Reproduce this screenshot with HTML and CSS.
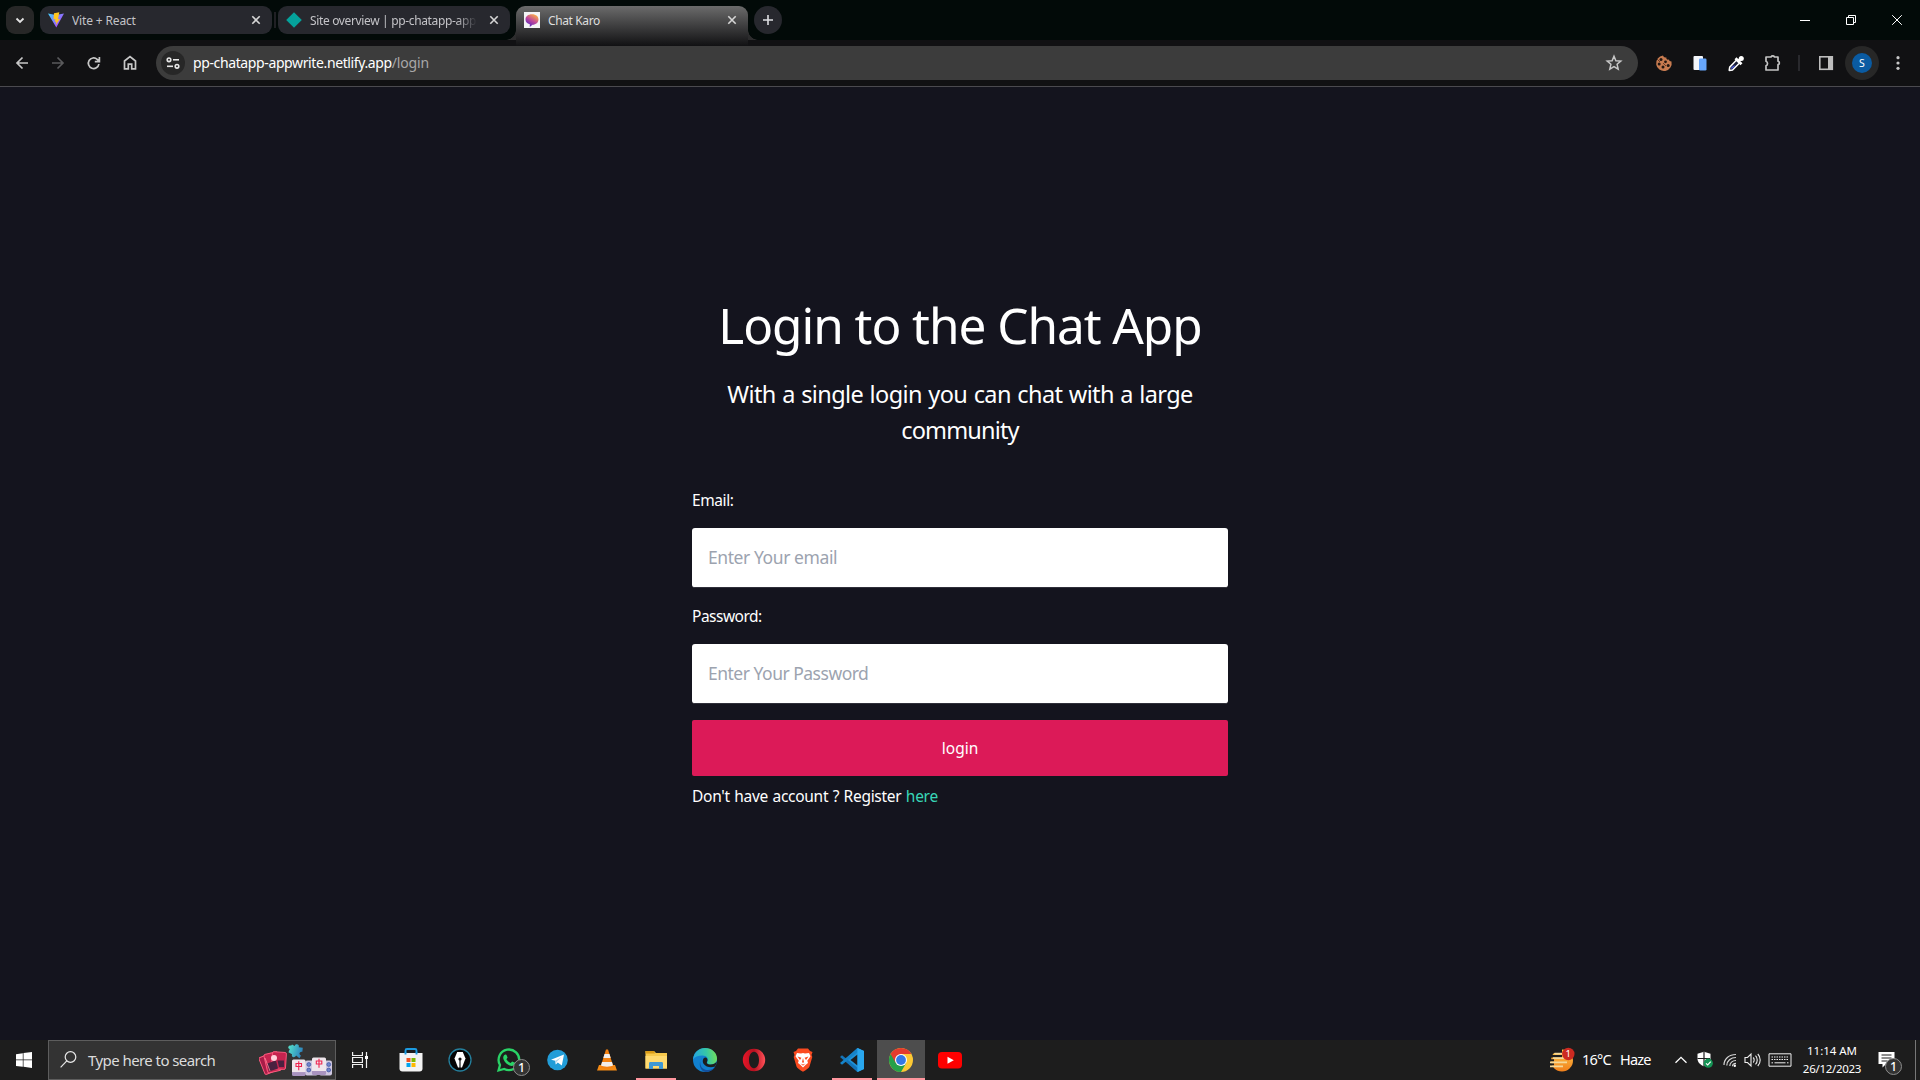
FILE: index.html
```html
<!DOCTYPE html>
<html lang="en">
<head>
<meta charset="utf-8">
<title>Chat Karo</title>
<link rel="stylesheet" href="styles.css">
</head>
<body>
<div class="screen">
  <header class="tabstrip">
    <button class="tab-search"><svg width="28" height="28" viewBox="0 0 28 28"><path d="M10.500 12.500l3.500 3.500 3.500-3.500" fill="none" stroke="#e3e3e3" stroke-width="1.800"/></svg></button>
    <div class="tab tab-first">
      <svg class="favicon" width="16" height="16" viewBox="0 0 16 16"><defs><linearGradient id="vite" x1="0" x2="1" y2=".8"><stop stop-color="#41d1ff"/><stop offset="1" stop-color="#bd34fe"/></linearGradient></defs><path d="M0 1.500L8 3l8-1.500L8.300 15.500z" fill="url(#vite)"/><path d="M11.300.300L6 1.300l-.500 6.200 1.900-.400-.600 2.800 1.500-.400-.500 3.500L12 6.800l-2 .400z" fill="#ffc61f"/></svg>
      <span class="tab-title t-vite">Vite + React</span>
      <svg class="close" width="10" height="10" viewBox="0 0 10 10"><path d="M1.300 1.300l7.400 7.400m0-7.400L1.300 8.700"/></svg>
    </div>
    <i class="tab-divider"></i>
    <div class="tab">
      <svg class="favicon" width="16" height="16" viewBox="0 0 16 16"><path d="M8 .200L15.800 8 8 15.800.200 8z" fill="#05a29b"/></svg>
      <span class="tab-title t-site">Site overview | pp-chatapp-app</span>
      <svg class="close" width="10" height="10" viewBox="0 0 10 10"><path d="M1.300 1.300l7.400 7.400m0-7.400L1.300 8.700"/></svg>
    </div>
    <div class="tab tab-active">
      <svg class="favicon" width="16" height="16" viewBox="0 0 16 16"><defs><linearGradient id="karo" x1=".8" y1="0" x2=".2" y2="1"><stop stop-color="#ffb340"/><stop offset=".5" stop-color="#c0479b"/><stop offset="1" stop-color="#4420c4"/></linearGradient></defs><rect width="16" height="16" fill="#f4f4f6"/><path d="M8 2.300c4.200 0 6.500 2.300 6.500 5.200S12 12.700 8.500 12.800L5.800 15v-2.700C3 11.500 1.500 10 1.500 7.500c0-3 2.500-5.200 6.500-5.200z" fill="url(#karo)"/></svg>
      <span class="tab-title t-karo">Chat Karo</span>
      <svg class="close" width="10" height="10" viewBox="0 0 10 10"><path d="M1.300 1.300l7.400 7.400m0-7.400L1.300 8.700"/></svg>
    </div>
    <button class="new-tab"><svg width="28" height="28" viewBox="0 0 28 28"><path d="M14 9v10M9 14h10" stroke="#dedee2" stroke-width="1.600"/></svg></button>
    <div class="window-controls">
      <svg width="46" height="40" viewBox="0 0 46 40"><path d="M18 20.500h10"/></svg>
      <svg width="46" height="40" viewBox="0 0 46 40"><path d="M18.500 17.500h7v7h-7zM20.500 17v-1.500h7v7H26"/></svg>
      <svg width="46" height="40" viewBox="0 0 46 40"><path d="M18.200 15.200l9.600 9.600m0-9.600l-9.600 9.600"/></svg>
    </div>
  </header>

  <nav class="toolbar">
    <div class="nav-buttons">
      <svg width="36" height="34" viewBox="0 0 36 34"><path d="M28 17H17m5.500-5.500L17 17l5.500 5.500" /></svg>
      <svg class="dim" width="36" height="34" viewBox="0 0 36 34"><path d="M16 17h11m-5.500-5.500L27 17l-5.500 5.500"/></svg>
      <svg width="36" height="34" viewBox="0 0 36 34"><path d="M26.900 18A5.300 5.300 0 1 1 25.200 13.300L27.200 15.300M27.400 11v4.600h-4.600"/></svg>
      <svg width="36" height="34" viewBox="0 0 36 34"><path d="M16.500 22.800V15l5.500-4.300 5.500 4.300v7.800h-3.800v-4.600h-3.400v4.600z"/></svg>
    </div>
    <div class="omnibox">
      <div class="site-info"><svg width="24" height="24" viewBox="0 0 24 24"><circle cx="8" cy="8.800" r="1.800"/><path d="M12 8.800h6"/><path d="M6 15.300h6"/><circle cx="16" cy="15.300" r="1.800"/></svg></div>
      <div class="url"><span class="host">pp-chatapp-appwrite.netlify.app</span><span class="path">/login</span></div>
      <svg class="star" width="18" height="18" viewBox="0 0 18 18"><path d="M9 2.200l1.900 4.500 4.900.400-3.700 3.200 1.100 4.800L9 12.600l-4.200 2.500 1.100-4.800-3.700-3.200 4.900-.400z"/></svg>
    </div>
    <div class="extensions">
      <svg width="36" height="34" viewBox="0 0 36 34"><path d="M17 9.500a7.800 7.800 0 1 0 8.500 6c-1.500 0-2.500-.8-2.500-2-1.800.500-3-.500-2.600-2-1.500.200-2.800-.500-3.400-2z" fill="#c77b50"/><g fill="#231711"><circle cx="15" cy="13.500" r="1.500"/><circle cx="19.500" cy="15.800" r="1.400"/><circle cx="13.200" cy="18" r="1.500"/><circle cx="17" cy="21" r="1.500"/><circle cx="22.200" cy="19.500" r="1.500"/></g><path d="M11 13l3 3m3 1l3 3" stroke="#6d3c25"/></svg>
      <svg width="36" height="34" viewBox="0 0 36 34"><rect x="11.500" y="10" width="9.500" height="14" rx="1" fill="#f4f6fb"/><rect x="17" y="12.500" width="7.500" height="12" rx="1.200" fill="#67a6fb"/></svg>
      <svg width="36" height="34" viewBox="0 0 36 34"><path d="M18.500 14l3 3-7 7-3 .500-.300-.300.500-3z" fill="#171b35" stroke="#fff" stroke-width="1.500"/><path d="M13 22.800l.500-1.800 2.500-1.500h1.500l-3.300 3.200z" fill="#4b5bd8"/><path d="M17.500 12.200l6 6M20.500 15l3.200-3.500" stroke="#fff" stroke-width="2.800"/><circle cx="23.300" cy="12.500" r="2.500" fill="#fff"/></svg>
      <svg width="36" height="34" viewBox="0 0 36 34"><path d="M12 11h5a2 2 0 0 1 3.500 0H24v4.200a1.800 1.800 0 0 1 0 3.500V24H12v-4.200a2.500 2.500 0 0 0 0-4.600z" fill="none" stroke="#c3c3c3" stroke-width="1.700" stroke-linejoin="round"/></svg>
      <i class="tool-divider"></i>
      <svg width="36" height="34" viewBox="0 0 36 34"><rect x="11.800" y="10.800" width="12.500" height="12.500" fill="none" stroke="#bdbdbd" stroke-width="1.600"/><path d="M20 10h5v14h-5z" fill="#bdbdbd"/></svg>
      <div class="profile"><span>S</span></div>
      <svg class="menu" width="8" height="34" viewBox="0 0 8 34" fill="#c7c7c7"><circle cx="4" cy="11.700" r="1.600"/><circle cx="4" cy="17" r="1.600"/><circle cx="4" cy="22.300" r="1.600"/></svg>
    </div>
  </nav>

  <main class="page">
    <section class="login">
      <h1>Login to the Chat App</h1>
      <p class="lead">With a single login you can chat with a large<br><span class="lead-end">community</span></p>
      <form class="form">
        <label class="label-email" for="email">Email:</label>
        <input id="email" class="in-email" type="text" placeholder="Enter Your email">
        <label class="label-pass" for="pass">Password:</label>
        <input id="pass" class="in-pass" type="password" placeholder="Enter Your Password">
        <button class="submit" type="button">login</button>
      </form>
      <p class="register">Don't have account ? Register <a>here</a></p>
    </section>
  </main>

  <footer class="taskbar">
    <div class="start"><svg width="16" height="16" viewBox="0 0 16 16" fill="#fff"><path d="M0 2.200l6.800-1v6.300H0zM7.500 1.100L16 0v7.500H7.500zM0 8.300h6.800v6.500L0 13.900zM7.500 8.300H16V16l-8.500-1.200z"/></svg></div>
    <div class="search">
      <svg width="17" height="17" viewBox="0 0 17 17" fill="none" stroke="#e8e8e8" stroke-width="1.200"><circle cx="10.500" cy="6" r="5.300"/><path d="M6.800 9.800L.600 16.300"/></svg>
      <span class="search-text">Type here to search</span>
      <svg class="doodle" width="74" height="36" viewBox="0 0 74 36">
        <defs><linearGradient id="pz" x1="0" x2="1"><stop stop-color="#55dfca"/><stop offset="1" stop-color="#2c82bd"/></linearGradient><linearGradient id="tile" x2="0" y2="1"><stop offset=".76" stop-color="#efe6ec"/><stop offset=".79" stop-color="#a893bf"/></linearGradient></defs>
        <g stroke="#ff5c80" stroke-width=".9"><rect x="2.500" y="13" width="14" height="18" rx="1.500" transform="rotate(-22 9 22)" fill="#a81c48"/><rect x="6.500" y="11" width="14" height="19" rx="1.500" transform="rotate(-13 13 20)" fill="#c5244f"/><rect x="13" y="10" width="14" height="17" rx="1.500" transform="rotate(4 19 18)" fill="#c5244f"/></g>
        <path d="M8 21.500l9-3 2 8-9 3zM18.500 18.500h6.500v6.500h-5z" fill="#4a2140"/><circle cx="15" cy="16" r="3" fill="#ffd2dc"/><path d="M6 16l5 13" stroke="#ff8ca2" stroke-width=".8"/>
        <path d="M31.500 4l3 .5c.3-3 4.300-3 4.300 0l4-.8.800 4c-3 .3-3 3.800 0 4l-.8 3-4-1.500c-.5 3.500-4.500 3-4.300 0l-4-.700.300-3.500c-2.800 0-2.800-3.600.300-3.800z" transform="rotate(18 37 8)" fill="url(#pz)"/>
        <rect x="46" y="18.500" width="13" height="15" rx="2" fill="#cfc7e0"/><rect x="60" y="18.500" width="13" height="15" rx="2" fill="#cfc7e0"/>
        <g fill="#7285cc" stroke="#4258a3" stroke-width=".8"><circle cx="49.800" cy="22.500" r="1.900"/><circle cx="49.800" cy="28" r="1.900"/><circle cx="69.700" cy="22.500" r="1.900"/><circle cx="69.700" cy="28" r="1.900"/></g>
        <rect x="33" y="17.500" width="13.500" height="16.500" rx="1.500" fill="url(#tile)"/><rect x="53" y="15.500" width="14" height="17.500" rx="1.500" fill="url(#tile)"/>
        <path d="M37 21.500h5.500v3H37zM39.750 19.200v9M57.300 19h5.500v3h-5.500zM60 16.700v9" fill="none" stroke="#ee2450" stroke-width="1.100"/>
      </svg>
    </div>
    <div class="cell taskview"><svg width="18" height="18" viewBox="0 0 18 18" fill="none" stroke="#f0f0f0" stroke-width="1.200"><path d="M1.600 1v3.500h9.800V1M1.600 17v-3.500h9.800V17M1.600 6.500h9.800v5H1.600zM15.500 1v16"/><path d="M14 5h3v3h-3z" fill="#fff" stroke="none"/></svg></div>
    <div class="apps">
      <div class="cell"><svg width="26" height="26" viewBox="0 0 26 26"><path d="M7.500 7V3.500c0-1 .5-1.500 1.500-1.500h8c1 0 1.500.500 1.500 1.500V7" fill="none" stroke="#1c9be0" stroke-width="1.900"/><path d="M1.500 6h23v15.500c0 2-1 3-3 3h-17c-2 0-3-1-3-3z" fill="#f3f3f3"/><path d="M7.500 5.500V7.500M18.500 5.500V7.500" stroke="#1c9be0" stroke-width="1.900"/><path d="M8.500 11h4v4h-4z" fill="#f25022"/><path d="M13.500 11h4v4h-4z" fill="#7fba00"/><path d="M8.500 16h4v4h-4z" fill="#00a4ef"/><path d="M13.500 16h4v4h-4z" fill="#ffb900"/></svg></div>
      <div class="cell"><svg width="26" height="26" viewBox="0 0 26 26"><circle cx="13" cy="13" r="11" fill="#050505" stroke="#257f9c" stroke-width="1.300"/><path d="M10.200 5h5.600l2.700 6.500-3.500 9h-4l-3.500-9z" fill="#fff"/><path d="M13 13v8" stroke="#111" stroke-width="1.200"/><circle cx="13" cy="12" r="1.600" fill="#111"/></svg></div>
      <div class="cell badge-host"><svg width="26" height="26" viewBox="0 0 26 26"><path d="M2.500 23.500L4 18A10.300 10.300 0 1 1 8.200 22z" fill="none" stroke="#29d366" stroke-width="2.300"/><path d="M9.200 7.500l1.200.2 1.200 2.900-1.200 1.600c1 1.800 2.400 3 4.300 3.800l1.400-1.600 3 1.400c0 2.400-1.700 3.200-3.500 3.200-4.300-.7-7.800-4.400-8.400-8 0-1.600.8-3 2-3.500z" fill="#29d366"/></svg><span class="badge wa">1</span></div>
      <div class="cell"><svg width="26" height="26" viewBox="0 0 26 26"><circle cx="12.500" cy="13" r="10.300" fill="#229dd8"/><path d="M6 12.800l13-5.300-2.200 11-4-3-2 2-.5-3.700z" fill="#fff"/><path d="M10.300 13.800L16.500 10l-5 5-.7 2.500z" fill="#b5d7ea"/></svg></div>
      <div class="cell"><svg width="26" height="26" viewBox="0 0 26 26"><path d="M5 18h16l2 5.500H3z" fill="#f48a14"/><path d="M12 2.500h2L19.500 20c-2 2-11 2-13 0z" fill="#f48212"/><path d="M10.500 7h5l1.200 4H9.300zM8 15h10l1 3.500c-2 1.500-10 1.500-12 0z" fill="#f1eeec"/></svg></div>
      <div class="cell running"><svg width="26" height="26" viewBox="0 0 26 26"><path d="M2.500 4H11l2 2h11v15.500H2.500z" fill="#f7c94c"/><path d="M2.500 4H11l1 2.500H2.500z" fill="#d99b17"/><path d="M2.500 9h21.500v12.500H2.500z" fill="#ffda70"/><path d="M6 22v-5.500c0-1 .5-1.500 1.500-1.500h11c1 0 1.500.5 1.500 1.500V22h-4v-3h-6v3z" fill="#3e98d4"/></svg></div>
      <div class="cell"><svg width="26" height="26" viewBox="0 0 26 26"><defs><linearGradient id="ed" x1="0" x2="1" y1=".3" y2=".2"><stop stop-color="#25a5df"/><stop offset=".55" stop-color="#36c7a6"/><stop offset="1" stop-color="#76df55"/></linearGradient></defs><circle cx="13" cy="13" r="12" fill="#1180cf"/><path d="M1 12.500C2 5 7 1 13 1c7 0 12 5 12 10.500 0 4-3 6-6.500 6-3 0-4-1.500-3-3 1.500-3-1-6-5-6-4.500 0-8 1.500-9.500 4z" fill="url(#ed)"/><path d="M10 11c-2.500 2-2.500 8 1 10.500 4 3 9.500 1.500 12.300-2-2 4-6 5.500-10.300 5.500-4.500-1.200-7.500-8-3-14z" fill="#124f9c"/><path d="M11.500 11.500c2-2.500 5 0 3.700 2.800-1 2 0 3.200 3.300 3.200 2.500 0 5-.9 6.300-3-.3 1.800-.8 3.500-1.800 5-3.500 1.300-9 1-11.500-2.800-1-1.700-1-3.700 0-5.200z" fill="#1d1d1d"/></svg></div>
      <div class="cell"><svg width="26" height="26" viewBox="0 0 26 26"><defs><linearGradient id="op"><stop stop-color="#e81628"/><stop offset=".5" stop-color="#b5101f"/><stop offset="1" stop-color="#ff5158"/></linearGradient></defs><path fill-rule="evenodd" d="M13 1.800a11.200 11.200 0 1 0 0 22.400 11.200 11.200 0 0 0 0-22.400zm0 3c3.200 0 5 3.800 5 8.200s-1.800 8.200-5 8.200S8 17.400 8 13s1.800-8.200 5-8.200z" fill="url(#op)"/></svg></div>
      <div class="cell"><svg width="26" height="26" viewBox="0 0 26 26"><path d="M8 1.500h10L20 4l2.500 1L21.500 8l.8 2-2.800 9.500c-.5 1.500-3.500 3.500-6.500 5.200-3-1.700-6-3.700-6.500-5.200L3.700 10l.8-2-1-3L6 4z" fill="#fb4b20"/><path d="M7 6l4 .600 2-.600 2 .600L19 6l1.500 3.200-3.200 4.500.7 2.300-2.500 2-2.500 2.500-2.500-2.500L8 16l.7-2.300-3.200-4.500z" fill="#fff"/><path d="M7.500 9.500l4 1.200L10 13zM18.500 9.500l-4 1.200L16 13zM13 11l1 4-1 1-1-1zM10.500 16.500l2.500 1 2.500-1-2.500 2.300z" fill="#fb4b20"/></svg></div>
      <div class="cell running"><svg width="26" height="26" viewBox="0 0 26 26"><path d="M18.500 1L25 4v18l-6.500 3L6 13z" fill="#1e92d8"/><path d="M18.500 7.500v11L11.500 13z" fill="#1d1d1d"/><path d="M3 8.200l15.500 12.500V25L1 10z" fill="#1474b8"/><path d="M3 17.800L18.500 5.300V1L1 16z" fill="#1583c9"/><path d="M18.500 1L25 4v18l-6.500 3z" fill="#29a7ee"/></svg></div>
      <div class="cell running current"><svg width="26" height="26" viewBox="0 0 26 26"><circle cx="13" cy="13" r="12" fill="#fcc934"/><path d="M2.600 7A12 12 0 0 0 13 25l5.200-9L13 13z" fill="#25a04b"/><path d="M13 7h10.400A12 12 0 0 0 2.600 7L7.800 16z" fill="#e33b2e"/><circle cx="13" cy="13" r="6" fill="#fff"/><circle cx="13" cy="13" r="4.900" fill="#3478e5"/></svg></div>
      <div class="cell"><svg width="26" height="26" viewBox="0 0 26 26"><rect x="1" y="5" width="24" height="16.500" rx="4" fill="#f00"/><path d="M10.500 9.700l6.300 3.500-6.300 3.500z" fill="#fff"/></svg></div>
    </div>
    <div class="tray">
      <svg class="weather" width="26" height="26" viewBox="0 0 26 26"><defs><linearGradient id="sun" x2="0" y2="1"><stop stop-color="#ffc84a"/><stop offset="1" stop-color="#f07f1b"/></linearGradient></defs><circle cx="13" cy="13.500" r="11" fill="url(#sun)"/><path d="M0 2h13v4H0zM0 8h13v2.500H0zM0 12.300h5v2.200H0zM0 16.200h5v2.300H0z" fill="#1d1d1d"/><path d="M5.500 6.700H14M4 11.200h13M1 15.300h17M1 19.300h13" stroke="#f4d899" stroke-width="1.700"/><circle cx="19.300" cy="7" r="6.200" fill="#cc2a21"/><text x="19.300" y="10.300" class="weather-count">1</text></svg>
      <span class="temp">16°C</span><span class="haze">Haze</span>
      <svg class="chevron" width="14" height="16" viewBox="0 0 14 16"><path d="M1.500 10.800L7 5.300l5.500 5.500" fill="none" stroke="#fff" stroke-width="1.300"/></svg>
      <svg class="shield" width="18" height="18" viewBox="0 0 18 18"><path d="M8 .800l6.500 2v5c0 3-2.500 6-6.500 7.500C4 13.800 1.500 11 1.500 7.800v-5z" fill="#fff"/><path d="M8 1v14M1.500 7.500H14" stroke="#1d1d1d" stroke-width="1.200"/><circle cx="12.300" cy="12.200" r="4.600" fill="#159455"/><path d="M10 12.300l1.700 1.700 3-3.300" fill="none" stroke="#fff" stroke-width="1.200"/></svg>
      <svg class="wifi" width="14" height="16" viewBox="0 0 14 16" fill="none" stroke="#d5d5d5" stroke-width="1.200"><path d="M1 13C1 7 6 2.500 13 2.500M3.800 13.500c0-4.500 4-8 9.200-8M6.800 14c0-3 2.500-5.500 6.200-5.500M9.500 14.300c0-1.700 1.500-3 3.500-3"/><circle cx="11.800" cy="13.800" r="1.200" fill="#fff" stroke="none"/></svg>
      <svg class="sound" width="18" height="16" viewBox="0 0 18 16" fill="none" stroke="#eee" stroke-width="1.100"><path d="M1 5.500h2.500L7 2v12l-3.500-3.500H1zM9.200 5.500c1.300 1.300 1.300 3.700 0 5M11.500 3.700c2.300 2.300 2.300 6.300 0 8.600M13.800 2c3.200 3.300 3.200 8.700 0 12"/></svg>
      <svg class="keyboard" width="24" height="14" viewBox="0 0 24 14" fill="none" stroke="#f0f0f0"><path d="M1 .800h22v12.400H1z"/><path d="M3.500 4h17M3.500 6.500h17" stroke-dasharray="1.500 1"/><path d="M3.500 9.800h1.500M6.500 9.800h11M19 9.800h1.500"/></svg>
      <div class="clock"><span class="time">11:14 AM</span><span class="date">26/12/2023</span></div>
      <div class="notify badge-host"><svg width="18" height="18" viewBox="0 0 18 18"><path d="M.500 1h16v12H8l-3.500 3.500V13h-4z" fill="#fff"/><path d="M3.500 4h10M3.500 7h10M3.500 10h6" stroke="#1d1d1d"/></svg><span class="badge nt">1</span></div>
    </div>
  </footer>
</div>
</body>
</html>
```
FILE: styles.css
```css
* { box-sizing: border-box; }
body { margin: 0; font-family: "Noto Sans", "Open Sans", sans-serif; color: #fff; background: #14141e; }
svg { display: block; flex: none; }
button { border: 0; padding: 0; font: inherit; color: inherit; }
.screen { width: 1920px; height: 1080px; display: flex; flex-direction: column; overflow: hidden; }

.tabstrip { height: 40px; flex: none; display: flex; padding: 6px 0 0 6px; background: #020a08; }
.tab-search { width: 28px; height: 28px; border-radius: 9px; background: #272727; margin-right: 6px; }
.tab { position: relative; width: 232px; height: 28px; border-radius: 9px; background: #27282e; display: flex; align-items: center; padding: 0 11px 0 8px; }
.favicon { margin-right: 8px; }
.tab-title { flex: 1; font-size: 12px; line-height: 28px; color: #c3c3c7; white-space: nowrap; overflow: hidden; padding-top: 1px; }
.t-vite { letter-spacing: -.15px; }
.t-site { letter-spacing: -.35px; margin-right: 12px; -webkit-mask-image: linear-gradient(90deg, #000 88%, transparent); mask-image: linear-gradient(90deg, #000 88%, transparent); }
.t-karo { letter-spacing: -.38px; color: #dedede; }
.close path { stroke: #d5d5d5; stroke-width: 1.6; }
.tab-divider { width: 2px; height: 16px; margin: 6px 2px; background: #202024; }
.tab-active { margin-left: 6px; height: 40px; padding-bottom: 12px; border-radius: 9px 9px 0 0; background: linear-gradient(#6b6b6b, #111113); }
.tab-active::before, .tab-active::after { content: ""; position: absolute; top: 24px; width: 10px; height: 10px; }
.tab-active::before { left: -10px; background: radial-gradient(circle at 0 0, transparent 9.5px, #2c2c2d 10px); }
.tab-active::after { right: -10px; background: radial-gradient(circle at 100% 0, transparent 9.5px, #2c2c2d 10px); }
.new-tab { width: 28px; height: 28px; border-radius: 50%; background: #27282e; margin-left: 6px; }
.window-controls { display: flex; margin: -6px 0 0 auto; }
.window-controls path { fill: none; stroke: #fff; stroke-width: 1; }

.toolbar { height: 47px; flex: none; display: flex; align-items: center; background: #111113; border-bottom: 1px solid #4b4a4f; }
.nav-buttons { display: flex; width: 156px; }
.nav-buttons path { fill: none; stroke: #c7c7c7; stroke-width: 1.7; }
.nav-buttons .dim path { stroke: #5a5a5c; }
.omnibox { width: 1482px; height: 34px; border-radius: 17px; background: #3c3c3c; display: flex; align-items: center; padding: 0 15px 0 5px; }
.site-info { width: 24px; height: 24px; border-radius: 50%; background: #272727; }
.site-info svg { fill: none; stroke: #e8e8e8; stroke-width: 1.6; }
.url { flex: 1; margin-left: 8px; font-size: 14px; line-height: 34px; white-space: nowrap; }
.host { letter-spacing: -.38px; }
.path { letter-spacing: -.15px; color: #a8a8a8; }
.star path { fill: none; stroke: #c7c7c7; stroke-width: 1.5; }
.extensions { display: flex; align-items: center; margin-left: 8px; }
.tool-divider { width: 2px; height: 16px; margin: 0 8px; background: #29292d; }
.profile { width: 34px; height: 34px; border-radius: 50%; background: #272727; display: grid; place-items: center; margin-left: 1px; }
.profile span { width: 20px; height: 20px; border-radius: 50%; background: #0a5ba2; font-size: 10.5px; line-height: 20px; text-align: center; }
.menu { margin-left: 15px; }

.page { flex: 1; background: #14141e; padding-top: 202px; }
.login { width: 536px; margin: 0 auto; }
h1 { margin: 0; font-size: 49.5px; line-height: 72px; font-weight: 400; letter-spacing: -1.05px; text-align: center; white-space: nowrap; }
.lead { margin: 15px 0 40px; font-size: 23.5px; line-height: 36px; letter-spacing: -.6px; word-spacing: .9px; text-align: center; white-space: nowrap; }
.lead-end { letter-spacing: -.83px; }
.form { display: flex; flex-direction: column; }
.form label { font-size: 15.5px; line-height: 24px; }
.label-email { letter-spacing: -.42px; margin-bottom: 16px; }
.label-pass { letter-spacing: -.5px; margin: 16px 0 16px; }
.form input { height: 60px; padding: 0 16px 2px; border: 0; border-bottom: 1px solid #30303a; border-radius: 3px; background: #fff; font-family: inherit; font-size: 17.5px; outline: 0; }
.form input::placeholder { color: #9ca3af; opacity: 1; }
.in-email { letter-spacing: -.42px; }
.in-pass { letter-spacing: -.5px; }
.submit { height: 56px; margin-top: 16px; border-radius: 2px; background: #dc1a58; font-size: 15.5px; }
.register { margin: 8px 0 0; font-size: 15.5px; line-height: 24px; letter-spacing: -.28px; word-spacing: .7px; }
.register a { color: #38d6b7; }

.taskbar { height: 40px; flex: none; display: flex; background: #1d1d1d; }
.start { width: 48px; display: grid; place-items: center; }
.search { width: 288px; border: 1px solid #5d5d5d; background: #333; display: flex; align-items: center; padding: 0 2px 0 11px; }
.search > svg:first-child { margin-top: -1px; }
.search-text { flex: 1; margin-left: 11px; font-size: 15px; letter-spacing: -.57px; color: #dcdcdc; white-space: nowrap; }
.cell { position: relative; width: 48px; height: 40px; display: grid; place-items: center; flex: none; }
.taskview { margin-right: 3px; }
.apps { display: flex; gap: 1px; }
.running::after { content: ""; position: absolute; left: 4px; right: 4px; bottom: 0; height: 2px; background: #ff969e; }
.current { background: #4d4d4d; }
.current::after { left: 0; right: 0; }
.badge-host { position: relative; }
.badge { position: absolute; width: 17px; height: 17px; border: 1px solid #8d8d8d; border-radius: 50%; background: #333; font-size: 12.5px; font-weight: 500; line-height: 15px; text-align: center; }
.wa { left: 28px; top: 19px; }
.nt { left: 7px; top: 18px; }
.tray { margin-left: auto; display: flex; align-items: center; border-right: 1px solid #777; margin-right: 4px; }
.weather-count { font-size: 9.5px; text-anchor: middle; fill: #fff; }
.temp, .haze { font-size: 14.5px; line-height: 39px; padding-bottom: 1px; white-space: nowrap; }
.temp { width: 30px; margin-left: 7px; letter-spacing: -.75px; }
.haze { width: 31px; margin-left: 8px; letter-spacing: -.8px; }
.chevron { margin-left: 23px; }
.shield { margin-left: 8px; }
.wifi { margin-left: 9px; }
.sound { margin-left: 7px; }
.keyboard { margin-left: 6px; }
.clock { width: 64px; margin-left: 8px; display: flex; flex-direction: column; align-items: center; font-size: 11.5px; line-height: 18px; white-space: nowrap; }
.time { letter-spacing: -.03px; }
.date { letter-spacing: -.29px; }
.notify { height: 40px; margin-left: 14px; padding-top: 11px; width: 37px; }
```
